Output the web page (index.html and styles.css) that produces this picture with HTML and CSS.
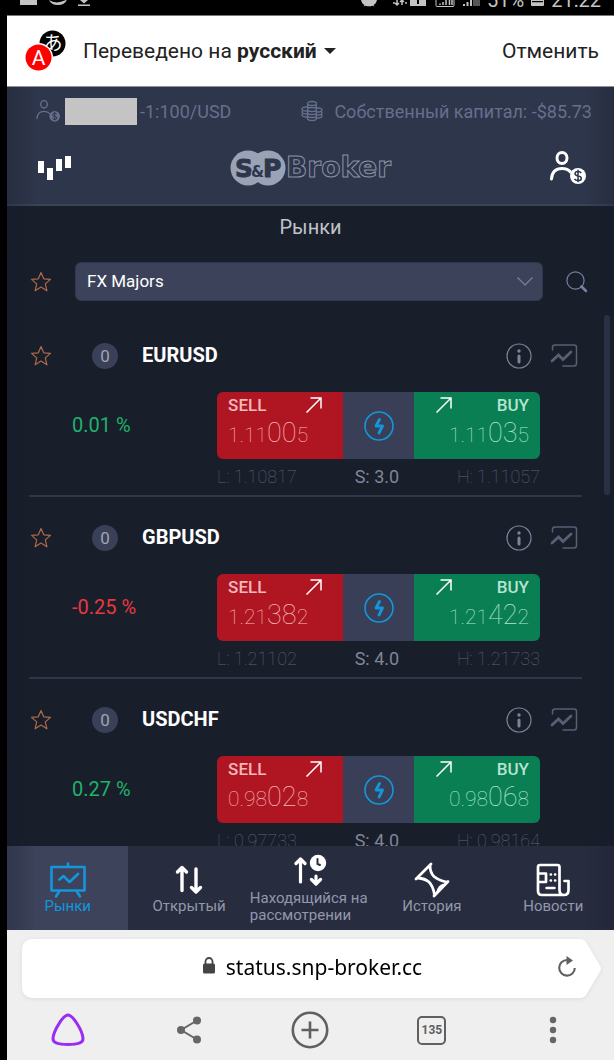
FILE: index.html
```html
<!DOCTYPE html>
<html lang="ru">
<head>
<meta charset="utf-8">
<meta name="viewport" content="width=device-width, initial-scale=1">
<title>S&amp;P Broker</title>
<link rel="stylesheet" href="styles.css">
</head>
<body>
<svg class="sprite" aria-hidden="true">
  <symbol id="star" viewBox="0 0 22 22"><path d="M11 1.500l2.700 6.300 6.800.6-5.200 4.500 1.600 6.900-5.900-3.700-5.900 3.700 1.600-6.900L1.500 8.400l6.800-.6z" fill="none" stroke="#b06a48" stroke-width="1.200" stroke-linejoin="round"/></symbol>
  <symbol id="info" viewBox="0 0 26 26"><circle cx="13" cy="13" r="12" fill="none" stroke="#7d839a" stroke-width="1.200"/><circle cx="13" cy="8" r="1.700" fill="#7d839a"/><path d="M13 13v6" stroke="#7d839a" stroke-width="3" stroke-linecap="round"/></symbol>
  <symbol id="chart" viewBox="0 0 28 26"><path d="M2.500 7V4.500q0-2.500 2.500-2.500H24q2.500 0 2.500 2.500v16q0 2.500-2.500 2.500H13" fill="none" stroke="#585f75" stroke-width="1.500" stroke-linecap="round"/><path d="M2 18l6.500-6 4.500 4.500L21 9" fill="none" stroke="#585f75" stroke-width="2.800" stroke-linecap="round"/></symbol>
  <symbol id="arrow" viewBox="0 0 16 16"><path d="M.5 15.500L15 1M4.500 1H15v10.500" fill="none" stroke="#fff" stroke-width="1.500"/></symbol>
  <symbol id="bolt" viewBox="0 0 30 30"><circle cx="15" cy="15" r="14" fill="none" stroke="#1496dd" stroke-width="1.600"/><path d="M15.500 8.500l-3.500 6.500 6.500 0-3.500 7" fill="none" stroke="#1496dd" stroke-width="2.800" stroke-linecap="round" stroke-linejoin="round"/></symbol>
  <symbol id="client" viewBox="0 0 36 34"><ellipse cx="12" cy="7" rx="5" ry="5.500" fill="none" stroke="currentColor" stroke-width="var(--line)"/><path d="M1.500 28C2 20.500 6.500 17.500 12 17.500c4 0 6.500 1 8.500 3.500" fill="none" stroke="currentColor" stroke-width="var(--line)" stroke-linecap="round"/><circle cx="28" cy="25" r="8" fill="currentColor"/><path d="M31.200 22q-1-1.600-3.200-1.600-3 0-3 2.200 0 1.900 3 2.300 3.300.4 3.300 2.500 0 2.200-3.300 2.200-2.500 0-3.500-1.700M28 18.800v12.400" fill="none" stroke="#2e364b" stroke-width="1.500"/></symbol>
</svg>

<div class="status">
  <svg width="18" height="10" viewBox="0 0 18 10"><path d="M0 0h17v5H0z" fill="#c4c4c4"/></svg>
  <svg width="20" height="10" viewBox="0 0 20 10"><path d="M1 0q7 5 18-.5Q17 5 10 5T1 0z" fill="#c4c4c4"/></svg>
  <svg width="12" height="10" viewBox="0 0 12 10"><path d="M2 0h8L6 3.500zM0 4.500h12V6H0z" fill="#c4c4c4"/></svg>
  <div class="status-right">
    <svg width="18" height="10" viewBox="0 0 18 10"><path d="M1 0h16q-1 4-3.500 5l1 1.500-2-.8q-3.500 1.300-7 0l-2 .8 1-1.500Q2 4 1 0z" fill="#c4c4c4"/></svg>
    <svg class="status-net" width="36" height="10" viewBox="0 0 36 10"><path d="M1 3h2M5 0v5M3 3l2 2 2-2M10 5V0M8 2l2-2 2 2M13 3h2" stroke="#c4c4c4" stroke-width="1.500" fill="none"/><path d="M18 0h16v6H18zM25 0h2v4h-2z" fill="#c4c4c4" fill-rule="evenodd"/></svg>
    <svg width="20" height="10" viewBox="0 0 20 10"><path d="M1 0v5.500q0 1 1 1h16q1 0 1-1V0" fill="none" stroke="#c4c4c4"/><path d="M5 5V3.500M8 5V2M11 5V0M14.500 5V0M17 5V0" stroke="#c4c4c4" stroke-width="1.500"/></svg>
    <svg width="18" height="10" viewBox="0 0 18 10"><path d="M2 6V4M5.500 6V2M9 6V0" stroke="#c4c4c4" stroke-width="2"/><path d="M11 0h7v6h-7z" fill="#555"/></svg>
    <span>51%</span>
    <svg width="13" height="10" viewBox="0 0 13 10"><path d="M0 0h13v5q0 1-1 1H1Q0 6 0 5zM1 1v1.200h11V1z" fill="#c4c4c4" fill-rule="evenodd"/></svg>
    <span>21:22</span>
  </div>
</div>

<div class="screen">
  <div class="translate">
    <svg class="translate-icon" width="40" height="40" viewBox="0 0 40 40"><circle cx="26.500" cy="12.500" r="13" fill="#000"/><text class="kana" x="27" y="19" text-anchor="middle">あ</text><circle cx="12.500" cy="26.500" r="14.500" fill="#fff"/><circle cx="12.500" cy="26.500" r="13" fill="#f00"/><text class="latin" x="12.500" y="34" text-anchor="middle">A</text></svg>
    <button class="translate-lang" type="button">Переведено на <b>русский</b><svg width="12" height="6" viewBox="0 0 12 6"><path d="M0 0h12L6 6z" fill="#222"/></svg></button>
    <button class="translate-cancel" type="button">Отменить</button>
  </div>

  <div class="app">
    <header class="header">
      <div class="account">
        <svg class="thin" width="24" height="24" viewBox="0 0 36 34"><use href="#client"/></svg>
        <span class="mask"></span>
        <span>-1:100/USD</span>
        <svg class="coins" width="22" height="22" viewBox="0 0 22 22"><g fill="#2e364b" stroke="currentColor" stroke-width="1.300"><ellipse cx="5.500" cy="15" rx="4.500" ry="2"/><ellipse cx="5.500" cy="12" rx="4.500" ry="2"/><ellipse cx="5.500" cy="9" rx="4.500" ry="2"/><ellipse cx="16.500" cy="16" rx="4.500" ry="2"/><ellipse cx="16.500" cy="13" rx="4.500" ry="2"/><ellipse cx="16.500" cy="10" rx="4.500" ry="2"/><ellipse cx="11" cy="6" rx="4.500" ry="2"/><ellipse cx="11" cy="3.500" rx="4.500" ry="2"/><ellipse cx="11" cy="18.500" rx="4.500" ry="2"/><ellipse cx="11" cy="15.500" rx="4.500" ry="2"/><ellipse cx="11" cy="12.500" rx="4.500" ry="2"/><ellipse cx="11" cy="9.500" rx="4.500" ry="2"/></g></svg>
        <span>Собственный капитал: -$85.73</span>
      </div>
      <div class="brand">
        <button class="icon-btn" type="button" aria-label="Меню"><svg width="34" height="26" viewBox="0 0 34 26"><path d="M0 6h6v12H0zM9 13h6v12H9zM18 4h6v12h-6zM27 1h6v12h-6z" fill="#fff"/></svg></button>
        <svg class="logo" width="164" height="38" viewBox="0 0 164 38"><circle cx="19" cy="19" r="17.500" fill="#9aa2b5"/><circle cx="39" cy="19" r="17.500" fill="#9aa2b5"/><text class="logo-dark" x="6" y="28">S</text><text class="logo-dark" x="34" y="28">P</text><text class="logo-amp" x="22" y="28">&amp;</text><text class="logo-line" x="57" y="28">Broker</text></svg>
        <button class="icon-btn" type="button" aria-label="Счёт"><svg class="bold" width="36" height="34" viewBox="0 0 36 34"><use href="#client"/></svg></button>
      </div>
    </header>

    <main class="markets">
      <h1>Рынки</h1>
      <div class="filter">
        <button class="icon-btn" type="button" aria-label="Избранное"><svg width="22" height="22"><use href="#star"/></svg></button>
        <div class="select">
          <select aria-label="Группа инструментов"><option>FX Majors</option></select>
          <svg width="16" height="9" viewBox="0 0 16 9"><path d="M.5.5L8 8 15.500.5" fill="none" stroke="#7d839a" stroke-width="1.200"/></svg>
        </div>
        <button class="icon-btn" type="button" aria-label="Поиск"><svg width="22" height="22" viewBox="0 0 22 22"><circle cx="9.500" cy="9.500" r="8.600" fill="none" stroke="#7581a0" stroke-width="1.200"/><path d="M15.500 15.500L20 20" stroke="#7581a0" stroke-width="2.600" stroke-linecap="round"/></svg></button>
      </div>

      <div class="list">
        <article class="pair">
          <div class="pair-head">
            <button class="icon-btn" type="button" aria-label="В избранное"><svg width="22" height="22"><use href="#star"/></svg></button>
            <span class="count">0</span>
            <h2>EURUSD</h2>
            <button class="icon-btn" type="button" aria-label="Сведения"><svg width="26" height="26"><use href="#info"/></svg></button>
            <button class="icon-btn" type="button" aria-label="График"><svg width="28" height="26"><use href="#chart"/></svg></button>
          </div>
          <div class="pair-body">
            <span class="change up">0.01 %</span>
            <div class="trade">
              <div class="quote">
                <button class="sell" type="button"><span class="side">SELL<svg width="16" height="16"><use href="#arrow"/></svg></span><span class="price">1.11<big>00</big>5</span></button>
                <button class="quick" type="button" aria-label="Быстрая сделка"><svg width="30" height="30"><use href="#bolt"/></svg></button>
                <button class="buy" type="button"><span class="side"><svg width="16" height="16"><use href="#arrow"/></svg>BUY</span><span class="price">1.11<big>03</big>5</span></button>
              </div>
              <div class="range"><span>L: 1.10817</span><span class="spread">S: 3.0</span><span>H: 1.11057</span></div>
            </div>
          </div>
        </article>
        <article class="pair">
          <div class="pair-head">
            <button class="icon-btn" type="button" aria-label="В избранное"><svg width="22" height="22"><use href="#star"/></svg></button>
            <span class="count">0</span>
            <h2>GBPUSD</h2>
            <button class="icon-btn" type="button" aria-label="Сведения"><svg width="26" height="26"><use href="#info"/></svg></button>
            <button class="icon-btn" type="button" aria-label="График"><svg width="28" height="26"><use href="#chart"/></svg></button>
          </div>
          <div class="pair-body">
            <span class="change down">-0.25 %</span>
            <div class="trade">
              <div class="quote">
                <button class="sell" type="button"><span class="side">SELL<svg width="16" height="16"><use href="#arrow"/></svg></span><span class="price">1.21<big>38</big>2</span></button>
                <button class="quick" type="button" aria-label="Быстрая сделка"><svg width="30" height="30"><use href="#bolt"/></svg></button>
                <button class="buy" type="button"><span class="side"><svg width="16" height="16"><use href="#arrow"/></svg>BUY</span><span class="price">1.21<big>42</big>2</span></button>
              </div>
              <div class="range"><span>L: 1.21102</span><span class="spread">S: 4.0</span><span>H: 1.21733</span></div>
            </div>
          </div>
        </article>
        <article class="pair">
          <div class="pair-head">
            <button class="icon-btn" type="button" aria-label="В избранное"><svg width="22" height="22"><use href="#star"/></svg></button>
            <span class="count">0</span>
            <h2>USDCHF</h2>
            <button class="icon-btn" type="button" aria-label="Сведения"><svg width="26" height="26"><use href="#info"/></svg></button>
            <button class="icon-btn" type="button" aria-label="График"><svg width="28" height="26"><use href="#chart"/></svg></button>
          </div>
          <div class="pair-body">
            <span class="change up">0.27 %</span>
            <div class="trade">
              <div class="quote">
                <button class="sell" type="button"><span class="side">SELL<svg width="16" height="16"><use href="#arrow"/></svg></span><span class="price">0.98<big>02</big>8</span></button>
                <button class="quick" type="button" aria-label="Быстрая сделка"><svg width="30" height="30"><use href="#bolt"/></svg></button>
                <button class="buy" type="button"><span class="side"><svg width="16" height="16"><use href="#arrow"/></svg>BUY</span><span class="price">0.98<big>06</big>8</span></button>
              </div>
              <div class="range"><span>L: 0.97733</span><span class="spread">S: 4.0</span><span>H: 0.98164</span></div>
            </div>
          </div>
        </article>
        <div class="scrollbar"></div>
      </div>
    </main>

    <nav class="tabs">
      <a class="active" href="#markets"><svg width="36" height="36" viewBox="0 0 36 36" fill="none" stroke="#1496dd" stroke-width="2.600" stroke-linecap="round" stroke-linejoin="round"><path d="M1.500 5h33v23.500h-33zM18 1.500V5M9.500 29L6 34.500M26.500 29l3.500 5.500M9.500 17.500l4-3.500 6 6L28 12"/></svg><span>Рынки</span></a>
      <a href="#open"><svg width="28" height="36" viewBox="0 0 28 36" fill="none" stroke="#fff" stroke-width="3.400" stroke-linecap="round" stroke-linejoin="round"><path d="M7 28.500V6M2.500 10L7 5.500 11.500 10M21 7v22M16.500 25.500L21 30l4.500-4.500"/></svg><span>Открытый</span></a>
      <a class="wide" href="#pending"><svg width="34" height="32" viewBox="0 0 34 32" fill="none" stroke="#fff" stroke-width="3.200" stroke-linecap="round" stroke-linejoin="round"><path d="M7.500 28V6M3 9.500L7.500 5l4.500 4.500M23 22v6M18.500 25.500L23 30l4.500-4.500"/><circle cx="25" cy="9" r="8.200" fill="#fff" stroke="none"/><path d="M24.500 5v5l2.500 1" stroke="#282c3f" stroke-width="2"/></svg><span>Находящийся на рассмотрении</span></a>
      <a href="#history"><svg width="36" height="36" viewBox="0 0 36 36" fill="none" stroke="#fff" stroke-width="2.800" stroke-linecap="round" stroke-linejoin="round"><path d="M17 2L2 17M34 19.500L20 34M16 3.500q0 7 4 11 4 3.500 12.500 5.500M4 16q7 .5 11 4 4 4 5.500 12.500"/><path d="M32 21.500q-8-1-10.500 10.500z" fill="#fff" stroke="none"/></svg><span>История</span></a>
      <a href="#news"><svg width="34" height="36" viewBox="0 0 34 36" fill="none" stroke="#fff" stroke-width="2.700" stroke-linecap="round" stroke-linejoin="round"><path d="M28 33H6q-4 0-4-4V5q0-2 2-2h17.500q2 0 2 2v23q0 5 4.500 5t4.500-5v-9h-4M2 11.500h8V20H2"/><path d="M14.700 12.500h.3M19 12.500h.3M14.700 18.500h.3M19 18.500h.3M10.500 26h8" stroke-width="2.500"/></svg><span>Новости</span></a>
    </nav>
  </div>

  <footer class="browser">
    <div class="address">
      <div class="address-box">
        <button class="url" type="button"><svg width="14" height="17" viewBox="0 0 14 17"><path d="M3.500 7V4.500a3.500 3.500 0 0 1 7 0V7" fill="none" stroke="#444" stroke-width="1.800"/><rect x="1" y="6.500" width="12" height="10" rx="1.500" fill="#444"/></svg>status.snp-broker.cc</button>
        <button class="icon-btn" type="button" aria-label="Обновить"><svg width="20" height="22" viewBox="0 0 20 22"><path d="M10 4a7.800 7.800 0 1 0 7.800 8" fill="none" stroke="#606060" stroke-width="2.100"/><path d="M9.500 0l6.500 4.500-6.500 4.500z" fill="#606060"/></svg></button>
      </div>
      <svg class="address-tip" width="22" height="59" viewBox="0 0 22 59"><path d="M0 0Q4 0 6 3l14 23.500q2 3 0 6L6 56q-2 3-6 3z" fill="#fff"/></svg>
    </div>
    <div class="toolbar">
      <button type="button" aria-label="Алиса"><svg width="34" height="34" viewBox="0 0 34 34"><path d="M17 2c-2.500 0-5 2.500-8.500 7.800C4.500 16 2.200 21 2 25.500c-.2 4.500 5 6 15 6s15.200-1.500 15-6C31.800 21 29.500 16 25.500 9.800 22 4.500 19.500 2 17 2z" fill="none" stroke="#9b2cf5" stroke-width="3"/></svg></button>
      <button type="button" aria-label="Поделиться"><svg width="26" height="28" viewBox="0 0 26 28"><path d="M21 4.500L5 14l16 9.500" fill="none" stroke="#666" stroke-width="2"/><circle cx="21" cy="4.500" r="4" fill="#666"/><circle cx="5" cy="14" r="4" fill="#666"/><circle cx="21" cy="23.500" r="4" fill="#666"/></svg></button>
      <button type="button" aria-label="Новая вкладка"><svg width="38" height="38" viewBox="0 0 38 38"><circle cx="19" cy="19" r="17.200" fill="none" stroke="#606060" stroke-width="2.600"/><path d="M19 10.500v17M10.500 19h17" stroke="#606060" stroke-width="2.600"/></svg></button>
      <button type="button" aria-label="Вкладки"><span class="tab-count">135</span></button>
      <button type="button" aria-label="Ещё"><svg width="8" height="28" viewBox="0 0 8 28" fill="#666"><circle cx="4" cy="4" r="3.200"/><circle cx="4" cy="14" r="3.200"/><circle cx="4" cy="24" r="3.200"/></svg></button>
    </div>
  </footer>
</div>
</body>
</html>
```

FILE: styles.css
```css
* {
  box-sizing: border-box;
}

body {
  margin: 0;
  padding-left: 7px;
  height: 100vh;
  display: flex;
  flex-direction: column;
  background: #000;
  font-family: Roboto, "Noto Sans", sans-serif;
  overflow: hidden;
}

button {
  margin: 0;
  padding: 0;
  border: 0;
  background: none;
  color: inherit;
  font: inherit;
}

svg {
  display: block;
  flex: none;
}

h1,
h2 {
  margin: 0;
}

.sprite {
  position: absolute;
  width: 0;
  height: 0;
}

.icon-btn {
  display: flex;
  flex: none;
}

/* Phone status bar */
.status {
  flex: none;
  display: flex;
  align-items: flex-end;
  gap: 10px;
  height: 15px;
  padding: 0 13px 5px;
  overflow: hidden;
  color: #c4c4c4;
  font-size: 20px;
  line-height: 20px;
}

.status-right {
  display: flex;
  align-items: flex-end;
  gap: 7px;
  margin-left: auto;
}

.status-net {
  margin-left: 7px;
}

.screen {
  flex: 1;
  min-height: 0;
  display: flex;
  flex-direction: column;
}

/* Translation bar */
.translate {
  flex: none;
  display: flex;
  align-items: center;
  height: 72px;
  padding: 0 15px 0 19px;
  background: #fff;
  border-top: 1px solid #777;
  border-bottom: 1px solid #8e9299;
  color: #222;
  font-size: 21px;
  line-height: 28px;
}

.translate-icon {
  overflow: visible;
}

.kana {
  fill: #fff;
  font: 19px "Noto Sans CJK JP", sans-serif;
}

.latin {
  fill: #fff;
  font: 21px Roboto, sans-serif;
}

.translate-lang {
  display: flex;
  align-items: center;
  margin-left: 17px;
  font-size: 21px;
  white-space: pre;
}

.translate-lang svg {
  margin-left: 7px;
}

.translate-cancel {
  margin-left: auto;
}

/* Trading application */
.app {
  position: relative;
  flex: 1;
  min-height: 0;
  display: flex;
  flex-direction: column;
  background: #191e2b;
}

.app::after {
  content: "";
  position: absolute;
  inset: 0;
  pointer-events: none;
  background: linear-gradient(90deg, rgba(22, 26, 42, 0.3), transparent 30px, transparent calc(100% - 30px), rgba(22, 26, 42, 0.3));
}

.header {
  flex: none;
  padding-bottom: 16px;
  background: #2e364b;
  border-bottom: 2px solid #3a4258;
}

.account {
  display: flex;
  align-items: center;
  height: 48px;
  padding: 0 22px 0 29px;
  color: #65708c;
  font-size: 18px;
  white-space: nowrap;
}

.thin {
  --line: 2;
}

.bold {
  --line: 3;
  color: #fff;
}

.mask {
  width: 72px;
  height: 27px;
  margin: 0 3px 0 5px;
  background: #c4c4c4;
}

.coins {
  margin: 0 11px 0 auto;
}

.brand {
  display: flex;
  align-items: center;
  justify-content: space-between;
  height: 53px;
  padding: 12px 28px 0 31px;
}

.logo text {
  font-family: "DejaVu Sans", sans-serif;
  font-weight: 700;
}

.logo .logo-dark {
  fill: #2e364b;
  stroke: #2e364b;
  stroke-width: 1;
  font-size: 25px;
}

.logo .logo-amp {
  fill: #2e364b;
  stroke: #9aa2b5;
  stroke-width: 2;
  paint-order: stroke;
  font-size: 15px;
}

.logo .logo-line {
  fill: none;
  stroke: #8a92a8;
  stroke-width: 1;
  font-size: 28px;
}

.markets {
  flex: 1;
  min-height: 0;
  display: flex;
  flex-direction: column;
}

.markets h1 {
  padding: 7px 0 21px;
  color: #c1c3c9;
  font-size: 20px;
  font-weight: 400;
  line-height: 28px;
  text-align: center;
}

.filter {
  flex: none;
  display: flex;
  align-items: center;
  gap: 23px;
  padding: 0 26px 0 23px;
}

.select {
  flex: 1;
  display: grid;
  align-items: center;
}

.select select,
.select svg {
  grid-area: 1 / 1;
}

.select select {
  appearance: none;
  width: 100%;
  height: 39px;
  padding: 0 11px 2px;
  border: 1px solid #30374d;
  border-radius: 6px;
  background: #3c4259;
  color: #fff;
  font: 17px Roboto, sans-serif;
}

.select svg {
  justify-self: end;
  margin-right: 10px;
  pointer-events: none;
}

.list {
  position: relative;
  flex: 1;
  min-height: 0;
  margin-top: 14px;
  padding: 0 32px 0 22px;
  overflow: hidden;
}

.pair {
  padding-top: 28px;
  border-bottom: 2px solid #30374b;
}

.pair-head {
  display: flex;
  align-items: center;
  height: 26px;
  padding: 0 4px 0 1px;
  margin-bottom: 23px;
}

.count {
  width: 26px;
  margin: 0 24px 0 40px;
  border-radius: 13px;
  background: #3a4057;
  color: #a0a4b2;
  font-size: 17px;
  line-height: 26px;
  text-align: center;
}

.pair-head h2 {
  flex: 1;
  color: #fff;
  font-size: 20px;
  font-weight: 700;
  line-height: 24px;
  padding-bottom: 2px;
}

.pair-head .icon-btn + .icon-btn {
  margin-left: 18px;
}

.pair-body {
  display: flex;
  padding: 0 42px 0 43px;
}

.change {
  flex: 1;
  font-size: 20px;
  line-height: 67px;
}

.up {
  color: #1fb26c;
}

.down {
  color: #e8383f;
}

.trade {
  flex: none;
  width: 69%;
}

.quote {
  display: grid;
  grid-template-columns: 7fr 4fr 7fr;
  height: 67px;
  border-radius: 6px;
  overflow: hidden;
}

.quote button {
  padding: 0 11px 4px;
  text-align: left;
}

.quote .sell {
  background: #b01621;
  color: #f4b8bd;
}

.quote .buy {
  background: #0a7f54;
  color: #b6e4d0;
}

.quote .quick {
  display: flex;
  align-items: center;
  justify-content: center;
  padding: 0;
  background: #383f56;
}

.side {
  display: flex;
  align-items: center;
  justify-content: space-between;
  font-size: 17px;
  font-weight: 500;
  line-height: 20px;
}

.sell .side {
  padding-right: 10px;
}

.buy .side {
  padding-left: 11px;
}

.price {
  display: block;
  font-size: 21px;
  font-weight: 100;
  line-height: 36px;
}

.price big {
  font-size: 27px;
}

.buy .price {
  text-align: right;
}

.range {
  display: flex;
  justify-content: space-between;
  color: #5d6479;
  font-size: 18px;
  font-weight: 100;
  line-height: 36px;
}

.spread {
  color: #80859a;
  font-weight: 400;
}

.scrollbar {
  position: absolute;
  top: 0;
  right: 4px;
  width: 6px;
  height: 180px;
  border-radius: 3px;
  background: #30364c;
}

/* Application tabs */
.tabs {
  flex: none;
  display: grid;
  grid-template-columns: repeat(5, 1fr);
  height: 84px;
  background: #282c3f;
}

.tabs a {
  display: flex;
  flex-direction: column;
  align-items: center;
  padding-top: 16px;
  color: #9298ab;
  font-size: 15px;
  line-height: 17px;
  text-decoration: none;
}

.tabs a.active {
  background: #3c435a;
  color: #1496dd;
}

.tabs a.wide {
  padding-top: 8px;
}

.tabs a.wide span {
  margin-top: 4px;
}

/* Browser controls */
.browser {
  flex: none;
  padding: 9px 0 11px;
  background: #efefef;
}

.address {
  display: flex;
  padding: 0 12px 0 15px;
  filter: drop-shadow(0 1px 2px rgba(0, 0, 0, 0.08));
}

.address-box {
  flex: 1;
  display: flex;
  align-items: center;
  height: 59px;
  padding: 0 3px 3px 0;
  border-radius: 10px 0 0 10px;
  background: #fff;
}

.url {
  flex: 1;
  display: flex;
  align-items: center;
  justify-content: center;
  gap: 10px;
  padding-left: 45px;
  color: #000;
  font-family: "Noto Sans", sans-serif;
  font-size: 21px;
  line-height: 28px;
}

.url svg {
  margin-bottom: 3px;
}

.toolbar {
  display: grid;
  grid-template-columns: repeat(5, 1fr);
  height: 51px;
  padding-top: 13px;
}

.toolbar button {
  display: flex;
  align-items: center;
  justify-content: center;
}

.tab-count {
  width: 29px;
  height: 29px;
  border: 2px solid #606060;
  border-radius: 5px;
  color: #606060;
  font-size: 12px;
  font-weight: 700;
  line-height: 25px;
  text-align: center;
}
```
